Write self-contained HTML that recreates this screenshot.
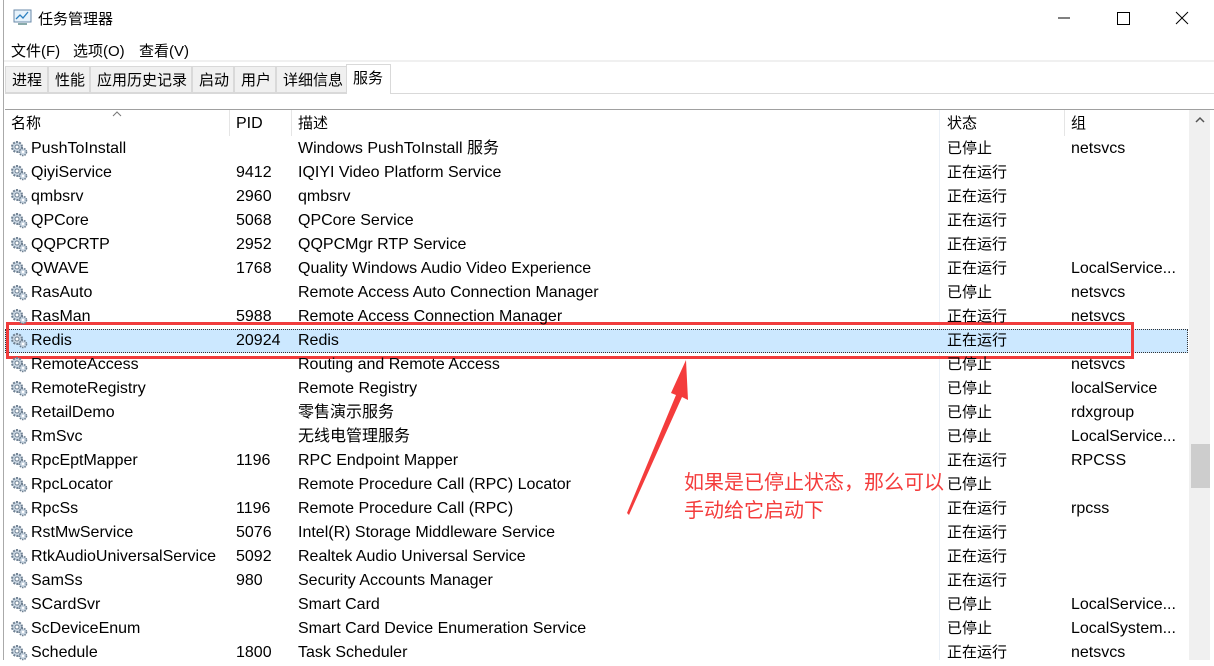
<!DOCTYPE html>
<html><head><meta charset="utf-8"><style>
*{margin:0;padding:0;box-sizing:border-box}
body{width:1214px;height:660px;overflow:hidden;background:#fff;position:relative;font-family:"Liberation Sans","Microsoft YaHei","Noto Sans CJK SC",sans-serif;font-size:15px;color:#000}
.abs{position:absolute;white-space:nowrap}
.tabs{position:absolute;left:5px;top:66px;height:28px;width:1209px;background:#fff;border-bottom:1px solid #d9d9d9}
.tab{position:absolute;top:0;height:27px;background:#f0f0f0;border:1px solid #d9d9d9;line-height:27px;padding-left:6px;font-size:15px}
.row{position:absolute;left:5px;width:1183px;height:24px;line-height:26px;font-size:16px}
.row span{position:absolute;top:0;white-space:nowrap}
.row .c{font-size:15px}
.ic{position:absolute;left:5px;top:4px;width:18px;height:17px}
</style></head><body>
<div class="abs" style="left:0;top:0;width:4px;height:660px;background:#fff;border-right:1px solid #aaa"></div>
<svg class="abs" style="left:13px;top:9px" width="19" height="17" viewBox="0 0 19 17"><rect x="1" y="1" width="17" height="12" fill="#e6f2fb" stroke="#6a8aa8"/><polyline points="3,10 7,6 10,9 15,3" fill="none" stroke="#2a7fc0" stroke-width="1.3"/><rect x="5" y="14" width="9" height="2" fill="#8aa"/></svg>
<div class="abs" style="left:38px;top:8px;font-size:15px">任务管理器</div>
<svg class="abs" style="left:1058px;top:10px" width="150" height="20"><line x1="0" y1="8" x2="12" y2="8" stroke="#000"/><rect x="59.5" y="2.5" width="12" height="12" fill="none" stroke="#000"/><path d="M118 2 L130 14 M130 2 L118 14" stroke="#000"/></svg>
<div class="abs" style="left:11px;top:40px">文件(F)</div>
<div class="abs" style="left:73px;top:40px">选项(O)</div>
<div class="abs" style="left:139px;top:40px">查看(V)</div>
<div class="abs" style="left:4px;top:60px;width:1210px;height:2px;background:#f0f0f0"></div>
<div class="tabs">
<div class="tab" style="left:0;width:43px">进程</div>
<div class="tab" style="left:43px;width:42px">性能</div>
<div class="tab" style="left:85px;width:102px">应用历史记录</div>
<div class="tab" style="left:187px;width:42px">启动</div>
<div class="tab" style="left:229px;width:42px">用户</div>
<div class="tab" style="left:271px;width:75px">详细信息</div>
<div class="tab" style="left:341px;width:45px;top:-2px;height:30px;background:#fff;border-bottom:none">服务</div>
</div>
<div class="abs" style="left:5px;top:109px;width:1209px;height:1px;background:#a0a0a0"></div>
<svg class="abs" style="left:112px;top:111px" width="10" height="6"><path d="M1 5 L5 1 L9 5" fill="none" stroke="#777"/></svg>
<div class="row" style="top:111px;height:25px">
<span class="c" style="left:6px">名称</span><span style="left:231px">PID</span><span class="c" style="left:293px">描述</span><span class="c" style="left:942px">状态</span><span class="c" style="left:1066px">组</span></div>
<div class="abs" style="left:229px;top:110px;width:1px;height:26px;background:#e5e5e5"></div>
<div class="abs" style="left:291px;top:110px;width:1px;height:26px;background:#e5e5e5"></div>
<div class="abs" style="left:939px;top:110px;width:1px;height:550px;background:#eaf0f7"></div>
<div class="abs" style="left:1064px;top:110px;width:1px;height:26px;background:#e5e5e5"></div>
<div class="abs" style="left:1189px;top:110px;width:21px;height:550px;background:#f0f0f0"></div>
<svg class="abs" style="left:1195px;top:116px" width="10" height="7"><path d="M1 6 L5 2 L9 6" fill="none" stroke="#555" stroke-width="1.5"/></svg>
<div class="abs" style="left:1191px;top:444px;width:19px;height:44px;background:#cdcdcd"></div>
<div id="rows"></div>
<div class="abs" style="left:5px;top:329px;width:1183px;height:24px;background:#cce8ff;border:1px dotted #333"></div>
<div class="abs" style="left:6px;top:322px;width:1128px;height:37px;border:3px solid #f03c3c"></div>
<svg class="abs" style="left:620px;top:355px" width="80" height="165"><polygon points="7,158 56,40 51,38 66,5 68,45 62,42 9,160" fill="#f43c3c"/></svg>
<div class="abs" style="left:684px;top:467px;color:#f43c3c;font-size:20px;line-height:28px;font-family:'Noto Sans CJK SC',sans-serif">如果是已停止状态，那么可以<br>手动给它启动下</div>
<script>
var d=[["PushToInstall","","Windows PushToInstall 服务","已停止","netsvcs"],["QiyiService","9412","IQIYI Video Platform Service","正在运行",""],["qmbsrv","2960","qmbsrv","正在运行",""],["QPCore","5068","QPCore Service","正在运行",""],["QQPCRTP","2952","QQPCMgr RTP Service","正在运行",""],["QWAVE","1768","Quality Windows Audio Video Experience","正在运行","LocalService..."],["RasAuto","","Remote Access Auto Connection Manager","已停止","netsvcs"],["RasMan","5988","Remote Access Connection Manager","正在运行","netsvcs"],["Redis","20924","Redis","正在运行",""],["RemoteAccess","","Routing and Remote Access","已停止","netsvcs"],["RemoteRegistry","","Remote Registry","已停止","localService"],["RetailDemo","","零售演示服务","已停止","rdxgroup"],["RmSvc","","无线电管理服务","已停止","LocalService..."],["RpcEptMapper","1196","RPC Endpoint Mapper","正在运行","RPCSS"],["RpcLocator","","Remote Procedure Call (RPC) Locator","已停止",""],["RpcSs","1196","Remote Procedure Call (RPC)","正在运行","rpcss"],["RstMwService","5076","Intel(R) Storage Middleware Service","正在运行",""],["RtkAudioUniversalService","5092","Realtek Audio Universal Service","正在运行",""],["SamSs","980","Security Accounts Manager","正在运行",""],["SCardSvr","","Smart Card","已停止","LocalService..."],["ScDeviceEnum","","Smart Card Device Enumeration Service","已停止","LocalSystem..."],["Schedule","1800","Task Scheduler","正在运行","netsvcs"]];
var h="",ic='<svg class="ic" viewBox="0 0 18 17"><circle cx="7" cy="7" r="5" fill="#c9d6e2" stroke="#6d7f91" stroke-dasharray="2 1.2" stroke-width="2"/><circle cx="7" cy="7" r="2" fill="#fff" stroke="#6d7f91"/><circle cx="13" cy="12" r="3.5" fill="#c9d6e2" stroke="#6d7f91" stroke-dasharray="1.5 1" stroke-width="1.6"/><circle cx="13" cy="12" r="1.2" fill="#fff"/></svg>';
d.forEach(function(r,i){var t=136+i*24;h+='<div class="row" style="top:'+t+'px;z-index:2">'+ic+'<span style="left:26px">'+r[0]+'</span><span style="left:231px">'+r[1]+'</span><span style="left:293px">'+r[2]+'</span><span class="c" style="left:942px">'+r[3]+'</span><span style="left:1066px">'+r[4]+'</span></div>';});
document.getElementById("rows").outerHTML=h;
</script>
</body></html>
